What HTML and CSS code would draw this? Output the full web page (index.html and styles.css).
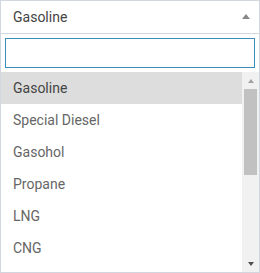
FILE: index.html
```html
<!DOCTYPE html>
<html lang="en">
<head>
  <meta charset="UTF-8">
  <meta name="viewport" content="width=device-width, initial-scale=1.0">
  <title>Fuel select</title>
  <link rel="stylesheet" href="styles.css">
</head>
<body>
  <div class="select-box">
    <div class="selection">
      <span class="selected-text">Gasoline</span>
      <span class="arrow"></span>
    </div>
    <div class="search">
      <input type="text" class="search-field">
    </div>
    <div class="results">
      <ul class="options">
        <li class="option highlighted">Gasoline</li>
        <li class="option">Special Diesel</li>
        <li class="option">Gasohol</li>
        <li class="option">Propane</li>
        <li class="option">LNG</li>
        <li class="option">CNG</li>
      </ul>
      <div class="scrollbar">
        <div class="scroll-btn"><span class="tri-up"></span></div>
        <div class="scroll-track"><div class="scroll-thumb"></div></div>
        <div class="scroll-btn"><span class="tri-down"></span></div>
      </div>
    </div>
  </div>
</body>
</html>
```

FILE: styles.css
```css
body { margin: 0; background: #fff; font-family: Roboto, 'Helvetica Neue', Arial, sans-serif; font-size: 14px; }

.select-box { width: 258px; height: 271px; border: 1px solid #d2d6de; display: flex; flex-direction: column; overflow: hidden; }

.selection { height: 32px; border-bottom: 1px solid #d2d6de; display: flex; align-items: center; justify-content: space-between; padding: 0 9px 0 12px; color: #444; }
.selected-text { line-height: 20px; margin-top: -1px; }
.arrow { width: 0; height: 0; border-style: solid; border-width: 0 4px 5px 4px; border-color: transparent transparent #888 transparent; margin-top: -1px; }

.search { padding: 4px; }
.search-field { display: block; box-sizing: border-box; width: 100%; height: 30px; margin: 0; border: 1px solid #3c8dbc; outline: none; padding: 4px 6px; font: inherit; }

.results { height: 200px; display: flex; }
.options { flex: 1; list-style: none; margin: 0; padding: 0; overflow: hidden; }
.option { height: 32px; line-height: 32px; padding: 0 12px; color: #666; }
.option.highlighted { background: #ddd; color: #444; }

.scrollbar { width: 17px; background: #f1f1f1; display: flex; flex-direction: column; }
.scroll-btn { height: 17px; display: flex; align-items: center; justify-content: center; }
.scroll-track { flex: 1; padding: 0 2px; }
.scroll-thumb { height: 86px; background: #c1c1c1; }
.tri-up { width: 0; height: 0; border-style: solid; border-width: 0 3.5px 4px 3.5px; border-color: transparent transparent #a3a3a3 transparent; }
.tri-down { width: 0; height: 0; border-style: solid; border-width: 4px 3.5px 0 3.5px; border-color: #505050 transparent transparent transparent; }
```
